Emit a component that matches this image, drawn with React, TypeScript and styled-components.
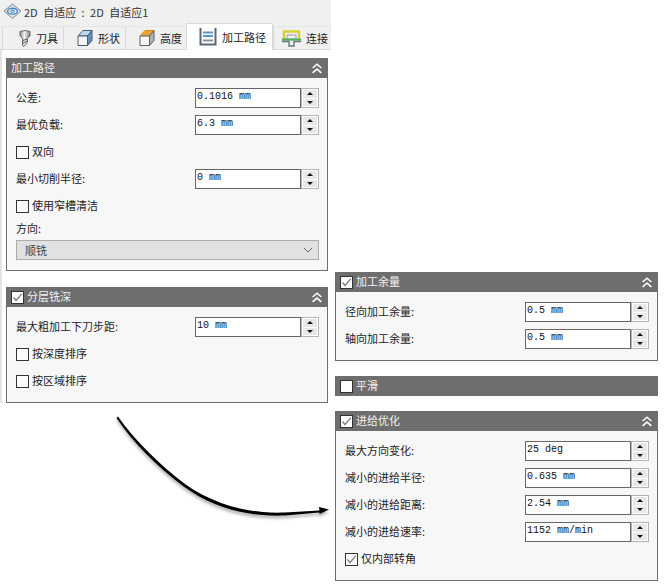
import React from "react";
import styled, { createGlobalStyle } from "styled-components";

const Global = createGlobalStyle`
  html, body { margin: 0; padding: 0; background: #fff; }
  body { font-family: "Noto Sans CJK SC", "Liberation Sans", sans-serif; font-size: 11px; color: #222; }
`;
const Page = styled.div`
  position: relative; width: 665px; height: 585px; overflow: hidden; display: flex; align-items: flex-start;
`;
const LeftColumn = styled.div`width: 331px; flex: none;`;
const RightColumn = styled.div`
  width: 323px; margin: 272px 0 0 4px; display: flex; flex-direction: column; gap: 15px; flex: none;
`;
const TitleBar = styled.div`
  height: 25px; background: #f0f0f0; display: flex; align-items: center; gap: 2px; padding: 0 0 2px 3px; box-sizing: border-box;
  font-size: 11px; color: #333; white-space: pre; word-spacing: 3px;
`;
const TabBar = styled.div`
  height: 25px; background: #f0f0f0; display: flex; padding-left: 2px; box-sizing: border-box; align-items: flex-end;
  border-bottom: 1px solid #d9d9d9;
`;
const Tab = styled.div<{ $w: number; $pr?: number; $active?: boolean }>`
  width: ${p => p.$w}px; box-sizing: border-box; display: flex; align-items: center; justify-content: flex-end; gap: 5px;
  padding-right: ${p => p.$pr ?? 5}px;
  height: ${p => (p.$active ? 27 : 23)}px;
  margin-bottom: ${p => (p.$active ? -1 : 0)}px;
  background: ${p => (p.$active ? "#fff" : "#f0f0f0")};
  border-left: 1px solid #d9d9d9;
  border-top: 1px solid ${p => (p.$active ? "#d9d9d9" : "#e6e6e6")};
  border-right: ${p => (p.$active ? "1px solid #d9d9d9" : "none")};
  font-size: 11px; color: #222; white-space: nowrap; overflow: hidden;
`;
const Content = styled.div`
  border-left: 2px solid #e4e4e4; padding: 8px 3px 0 4px; display: flex; flex-direction: column; gap: 16px;
`;
const Panel = styled.section`background: #f7f7f7; border: 1px solid #6e6e6e; border-top: 0;`;
const BarePanel = styled.section`& > header { margin: 0; }`;
const Header = styled.header`
  height: 20px; background: #6e6e6e; margin: 0 -1px; padding: 0 5px 0 5px; display: flex; align-items: center; gap: 3px;
  color: #f2f2f2; font-size: 11px; line-height: 18px;
`;
const HeaderTitle = styled.span`flex: 1; padding-bottom: 3px;`;
const Body = styled.div<{ $pb: number }>`
  padding: 10px 8px ${p => p.$pb}px 9px; display: flex; flex-direction: column; gap: 7px;
`;
const Row = styled.div`height: 20px; display: flex; align-items: center; justify-content: space-between;`;
const Label = styled.span`font-size: 11px; color: #222; line-height: 18px; padding-bottom: 2px;`;
const CheckRow = styled.label`height: 20px; display: flex; align-items: center; gap: 3px; font-size: 11px; color: #222; line-height: 18px;`;
const CheckText = styled.span`padding-bottom: 3px;`;
const Box = styled.span<{ $head?: boolean }>`
  width: 11px; height: 11px; border: 1px solid #333; background: ${p => (p.$head ? "#fff" : "#fbfbfb")};
  flex: none; display: flex; align-items: center; justify-content: center;
`;
const Spin = styled.div`display: flex; flex: none;`;
const ValueBox = styled.div`
  width: 106px; height: 20px; box-sizing: border-box; background: #fff; border: 1px solid #666; padding: 0 0 3px 1px;
  font-family: "Liberation Mono", "DejaVu Sans Mono", monospace; font-size: 10px; line-height: 15px; color: #111; white-space: pre;
`;
const Stepper = styled.div`
  width: 18px; height: 20px; box-sizing: border-box; border: 1px solid #b4b4b4; background: #fff;
  display: flex; flex-direction: column; padding: 1px; gap: 1px;
`;
const StepBtn = styled.div`
  flex: 1; background: #e8e8e8; display: flex; align-items: center; justify-content: center;
`;
const Arrowhead = styled.span<{ $down?: boolean }>`
  width: 0; height: 0; border-left: 3px solid transparent; border-right: 3px solid transparent;
  ${p => (p.$down ? "border-top: 3px solid #111;" : "border-bottom: 3px solid #111;")}
`;
const DirectionLabel = styled.div`font-size: 11px; color: #222; line-height: 14px; margin: -2px 0;`;
const Select = styled.div`
  height: 20px; box-sizing: border-box; background: #e1e1e1; border: 1px solid #adadad; display: flex; align-items: center;
  justify-content: space-between; padding: 0 5px 0 8px; font-size: 11px; color: #444;
`;
const ArrowCanvas = styled.svg`position: absolute; left: 0; top: 0; pointer-events: none;`;

const Collapse = () => (
  <svg width="12" height="12" viewBox="0 0 11 11" fill="none" stroke="#fff" strokeWidth="1.4">
    <path d="M1.5 5.5 5.5 2 9.5 5.5M1.5 10 5.5 6.5 9.5 10" />
  </svg>
);
const Tick = () => (
  <svg width="11" height="11" viewBox="0 0 11 11" fill="none" stroke="#777" strokeWidth="1.2">
    <path d="M1.5 5.5 4 8.5 9.8 1.8" />
  </svg>
);
const Check = ({ on, head }: { on?: boolean; head?: boolean }) => <Box $head={head}>{on && <Tick />}</Box>;

const Field = ({ label, value }: { label: string; value: string }) => (
  <Row>
    <Label>{label}</Label>
    <Spin>
      <ValueBox>{value}</ValueBox>
      <Stepper>
        <StepBtn><Arrowhead /></StepBtn>
        <StepBtn><Arrowhead $down /></StepBtn>
      </Stepper>
    </Spin>
  </Row>
);
const CheckField = ({ label, on }: { label: string; on?: boolean }) => (
  <CheckRow><Check on={on} /><CheckText>{label}</CheckText></CheckRow>
);
const PanelHead = ({ title, checkbox, on, collapse = true }: { title: string; checkbox?: boolean; on?: boolean; collapse?: boolean }) => (
  <Header>
    {checkbox && <Check on={on} head />}
    <HeaderTitle>{title}</HeaderTitle>
    {collapse && <Collapse />}
  </Header>
);

const AppIcon = () => (
  <svg width="19" height="17" viewBox="0 0 19 17">
    <path d="M9.5 1 18 8 9.5 15.5 1 8Z" fill="#d9dee4" stroke="#7f8a96" />
    <path d="M9.5 3.5 15.5 8 9.5 13 3.5 8Z" fill="#f4f6f8" />
    <ellipse cx="9.5" cy="8.2" rx="4.8" ry="2.9" fill="none" stroke="#3d7fc0" strokeWidth="1.4" />
    <ellipse cx="9.5" cy="8.2" rx="2" ry="1.1" fill="none" stroke="#3d7fc0" />
  </svg>
);
const ToolIcon = () => (
  <svg width="12" height="17" viewBox="0 0 12 17">
    <defs>
      <linearGradient id="toolG" x1="0" x2="1" y1="0" y2="0">
        <stop offset="0" stopColor="#8d8d8d" /><stop offset="0.45" stopColor="#f2f2f2" /><stop offset="1" stopColor="#7d7d7d" />
      </linearGradient>
    </defs>
    <path d="M1 1.5Q6-.5 11 1.5V6L8.5 8.5V12L5 16.5 3.5 15.5V8.5L1 6Z" fill="url(#toolG)" stroke="#6b6b6b" />
    <path d="M4 10.5 8 9M4 13 7.5 11.5" stroke="#555" fill="none" />
  </svg>
);
const ShapeIcon = () => (
  <svg width="16" height="18" viewBox="0 0 16 18" strokeLinejoin="round">
    <path d="M1 7 6 1.5H15L10.5 7Z" fill="#b9dcf4" stroke="#4c5a68" />
    <path d="M10.5 7 15 1.5V11.5L10.5 16.5Z" fill="#5b91c4" stroke="#4c5a68" />
    <path d="M1 7H10.5V16.5H1Z" fill="#f4f4f4" stroke="#4c5a68" />
  </svg>
);
const HeightIcon = () => (
  <svg width="16" height="18" viewBox="0 0 16 18" strokeLinejoin="round">
    <path d="M1 7 6 1.5H15L10.5 7Z" fill="#eda32f" stroke="#d08a1e" />
    <path d="M10.5 7 15 1.5V11.5L10.5 16.5Z" fill="#aeb2b6" stroke="#59616a" />
    <path d="M1 7H10.5V16.5H1Z" fill="#f6f6f6" stroke="#59616a" />
  </svg>
);
const PathIcon = () => (
  <svg width="18" height="18" viewBox="0 0 18 18" fill="none">
    <path d="M1.5 0V16.5H16.5V0" stroke="#5b6670" strokeWidth="2" />
    <path d="M4 4.5H14M4 8H14" stroke="#5b96cc" strokeWidth="2" />
    <path d="M4 12.5H14" stroke="#8a939b" strokeWidth="2" />
  </svg>
);
const LinkIcon = () => (
  <svg width="19" height="17" viewBox="0 0 19 17" fill="none">
    <path d="M2 8V1.5H17V8" stroke="#d6d32e" strokeWidth="2.4" />
    <path d="M5 8V5H14V8" stroke="#9aa0a4" strokeWidth="1" />
    <path d="M0 9.5H19" stroke="#55b05a" strokeWidth="2.4" />
    <path d="M0 11.5H7V16H12V11.5H19" stroke="#6a7378" strokeWidth="1.4" />
  </svg>
);
const Chevron = () => (
  <svg width="10" height="6" viewBox="0 0 10 6" fill="none" stroke="#666"><path d="M1 1 5 5 9 1" /></svg>
);

export default function App() {
  return (
    <Page>
      <Global />
      <LeftColumn>
        <TitleBar><AppIcon /><span>2D 自适应 : 2D 自适应1</span></TitleBar>
        <TabBar>
          <Tab $w={61}><ToolIcon />刀具</Tab>
          <Tab $w={62}><ShapeIcon />形状</Tab>
          <Tab $w={61} $pr={4}><HeightIcon />高度</Tab>
          <Tab $w={87} $pr={6} $active><PathIcon />加工路径</Tab>
          <Tab $w={58} $pr={3}><LinkIcon />连接</Tab>
        </TabBar>
        <Content>
          <Panel>
            <PanelHead title="加工路径" />
            <Body $pb={10}>
              <Field label="公差:" value="0.1016 mm" />
              <Field label="最优负载:" value="6.3 mm" />
              <CheckField label="双向" />
              <Field label="最小切削半径:" value="0 mm" />
              <CheckField label="使用窄槽清洁" />
              <DirectionLabel>方向:</DirectionLabel>
              <Select>顺铣<Chevron /></Select>
            </Body>
          </Panel>
          <Panel>
            <PanelHead title="分层铣深" checkbox on />
            <Body $pb={11}>
              <Field label="最大粗加工下刀步距:" value="10 mm" />
              <CheckField label="按深度排序" />
              <CheckField label="按区域排序" />
            </Body>
          </Panel>
        </Content>
      </LeftColumn>
      <RightColumn>
        <Panel>
          <PanelHead title="加工余量" checkbox on />
          <Body $pb={11}>
            <Field label="径向加工余量:" value="0.5 mm" />
            <Field label="轴向加工余量:" value="0.5 mm" />
          </Body>
        </Panel>
        <BarePanel>
          <PanelHead title="平滑" checkbox collapse={false} />
        </BarePanel>
        <Panel>
          <PanelHead title="进给优化" checkbox on />
          <Body $pb={11}>
            <Field label="最大方向变化:" value="25 deg" />
            <Field label="减小的进给半径:" value="0.635 mm" />
            <Field label="减小的进给距离:" value="2.54 mm" />
            <Field label="减小的进给速率:" value="1152 mm/min" />
            <CheckField label="仅内部转角" on />
          </Body>
        </Panel>
      </RightColumn>
      <ArrowCanvas width="665" height="585" viewBox="0 0 665 585">
        <defs>
          <filter id="sh" x="-10%" y="-10%" width="120%" height="130%">
            <feDropShadow dx="0" dy="2.5" stdDeviation="1.5" floodColor="#000" floodOpacity="0.35" />
          </filter>
        </defs>
        <path
          filter="url(#sh)"
          fill="#000"
          d="M118 416.5C135 441 160 465 185 484C213 504 248 514 285 512.5L319.5 510.5L319 507L329 509.5L319.5 514L319.5 512.5L285 515.5C246 517 211 507 183 486C158 467 133 443 116.5 418Z"
        />
      </ArrowCanvas>
    </Page>
  );
}
